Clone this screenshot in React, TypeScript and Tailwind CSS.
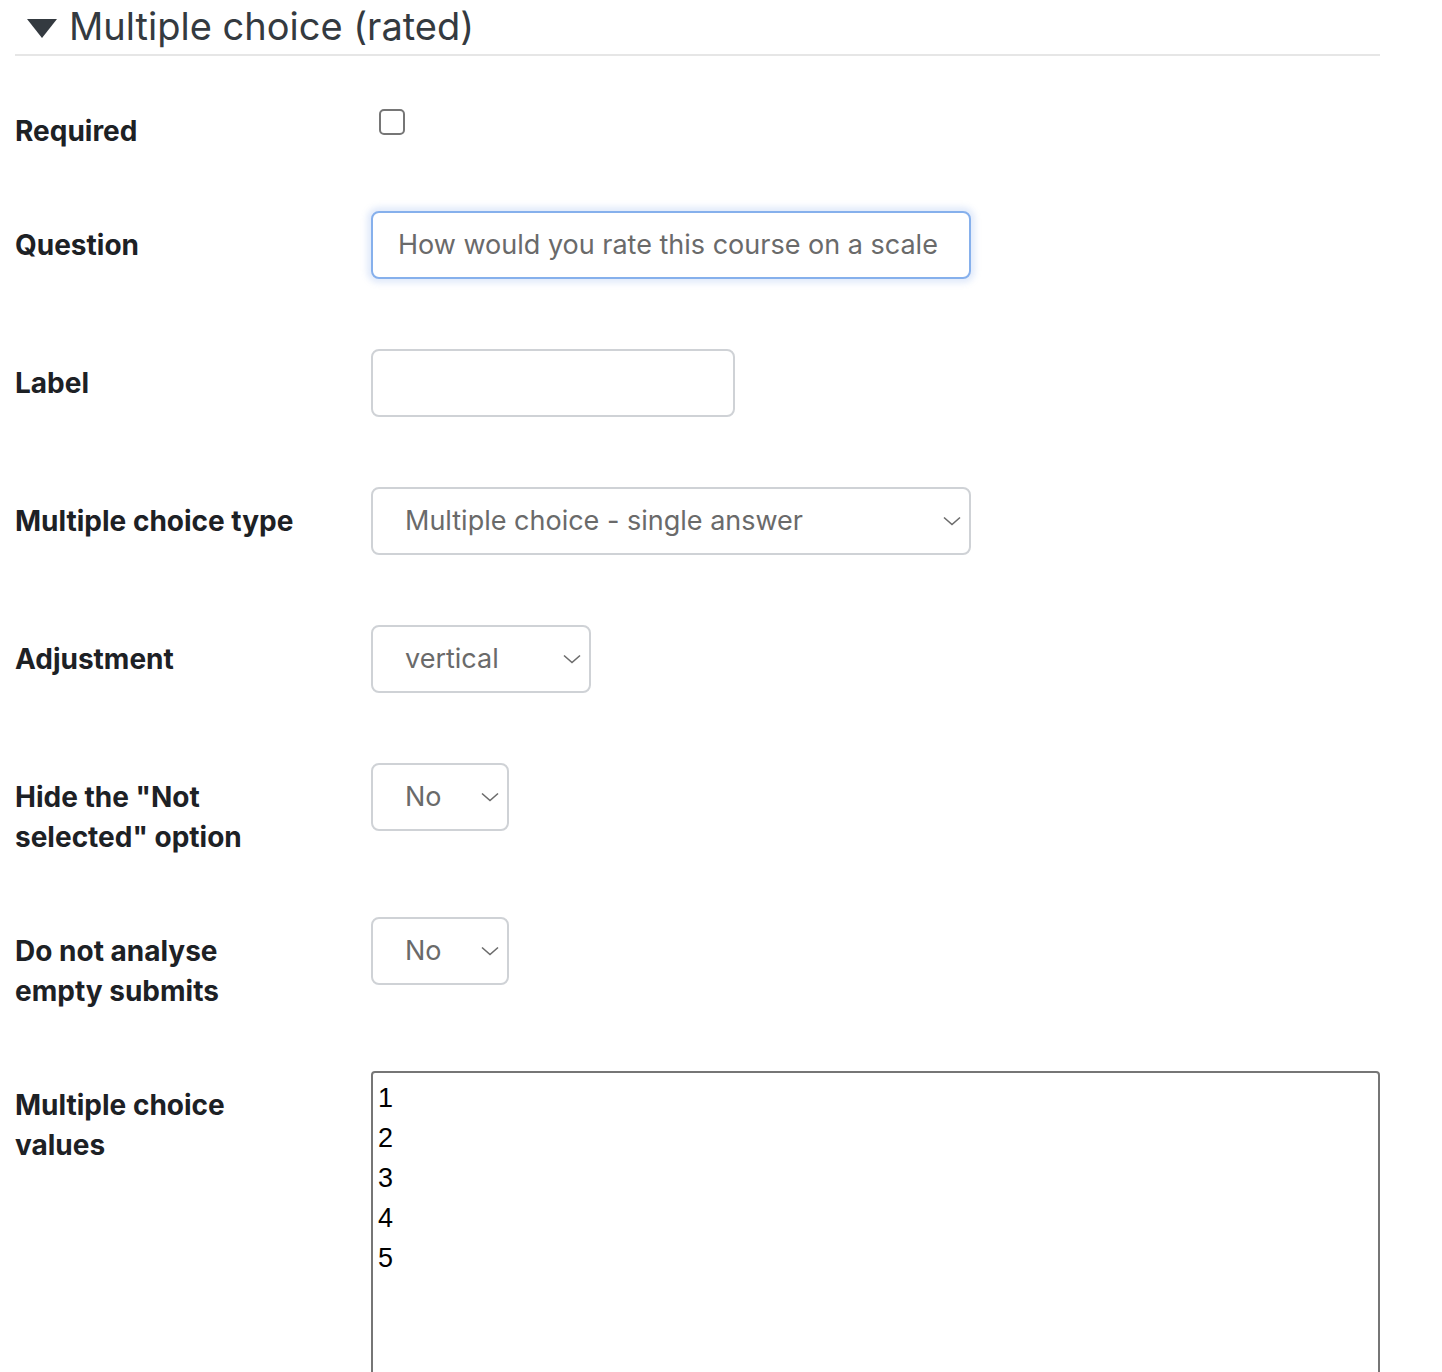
import React from "react";

const Chevron = () => (
  <svg width="18" height="10" viewBox="0 0 18 10" className="shrink-0">
    <path d="M1 1.5 L9 8.5 L17 1.5" fill="none" stroke="#6b6b6b" strokeWidth="1.6" />
  </svg>
);

function Row({ label, children, pb = true }: { label: React.ReactNode; children: React.ReactNode; pb?: boolean }) {
  return (
    <div className="flex items-start mb-[60px]">
      <div className="w-[356px] shrink-0 pt-[14px] text-[28px] leading-[40px] font-bold text-[#1d2125]">{label}</div>
      <div className={pb ? "flex-1 pb-[10px]" : "flex-1"}>{children}</div>
    </div>
  );
}

function Select({ value, width }: { value: string; width: string }) {
  return (
    <div className={`${width} h-[68px] rounded-[8px] border-2 border-[#cfd2d6] bg-white flex items-center justify-between pl-[32px] pr-[8px] text-[27px] text-[#6a6a6a]`}>
      <span>{value}</span>
      <Chevron />
    </div>
  );
}

export default function App() {
  return (
    <div className="bg-white h-[1372px] font-['Inter',sans-serif] overflow-hidden">
      <div className="pl-[15px] w-[1380px]">
        <div className="h-[56px] border-b-2 border-[#e6e6e6] flex items-center">
          <svg width="30" height="20" viewBox="0 0 30 20" className="ml-[12px] mt-[4px]">
            <polygon points="0,0 30,0 15,19" fill="#343a40" />
          </svg>
          <span className="ml-[12px] text-[38px] leading-[46px] text-[#343a40] -mt-[2px]">Multiple choice (rated)</span>
        </div>
        <div className="pt-[41px]">
          <Row label="Required">
            <div className="mt-[12px] ml-[8px] w-[26px] h-[26px] rounded-[5px] border-2 border-[#767676] bg-white" />
          </Row>
          <Row label="Question">
            <div className="w-[600px] h-[68px] rounded-[8px] border-2 border-[#86b0ec] bg-white shadow-[0_0_6px_4px_rgba(120,160,230,0.22)] flex items-center pl-[25px] text-[27px] text-[#6a6a6a]">
              How would you rate this course on a scale
            </div>
          </Row>
          <Row label="Label">
            <div className="w-[364px] h-[68px] rounded-[8px] border-2 border-[#cfd2d6] bg-white" />
          </Row>
          <Row label="Multiple choice type">
            <Select value="Multiple choice - single answer" width="w-[600px]" />
          </Row>
          <Row label="Adjustment">
            <Select value="vertical" width="w-[220px]" />
          </Row>
          <Row label={<>Hide the "Not<br />selected" option</>}>
            <Select value="No" width="w-[138px]" />
          </Row>
          <Row label={<>Do not analyse<br />empty submits</>}>
            <Select value="No" width="w-[138px]" />
          </Row>
          <Row label={<>Multiple choice<br />values</>}>
            <div className="w-[1009px] h-[420px] rounded-[4px] border-2 border-[#767676] bg-white pl-[5px] pt-[5px] font-['Liberation_Sans',Arial,sans-serif] text-[27px] leading-[40px] text-black">
              <div>1</div>
              <div>2</div>
              <div>3</div>
              <div>4</div>
              <div>5</div>
            </div>
          </Row>
        </div>
      </div>
    </div>
  );
}
